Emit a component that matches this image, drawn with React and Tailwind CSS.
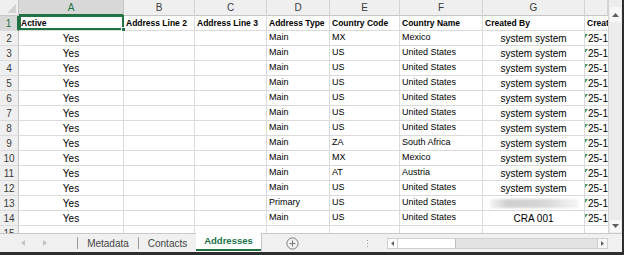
import { Fragment } from 'react';

// column widths in px, matching the sheet view
const columns = [
  { key: 'A', w: 'w-[105px]', label: 'A', selected: true },
  { key: 'B', w: 'w-[71px]', label: 'B' },
  { key: 'C', w: 'w-[72px]', label: 'C' },
  { key: 'D', w: 'w-[63px]', label: 'D' },
  { key: 'E', w: 'w-[70px]', label: 'E' },
  { key: 'F', w: 'w-[83px]', label: 'F' },
  { key: 'G', w: 'w-[102px]', label: 'G' },
  { key: 'H', w: 'w-[23px]', label: '' },
];

const headers = ['Active', 'Address Line 2', 'Address Line 3', 'Address Type', 'Country Code', 'Country Name', 'Created By', 'Created'];

const rows = [
  ['Main', 'MX', 'Mexico', 'system system'],
  ['Main', 'US', 'United States', 'system system'],
  ['Main', 'US', 'United States', 'system system'],
  ['Main', 'US', 'United States', 'system system'],
  ['Main', 'US', 'United States', 'system system'],
  ['Main', 'US', 'United States', 'system system'],
  ['Main', 'US', 'United States', 'system system'],
  ['Main', 'ZA', 'South Africa', 'system system'],
  ['Main', 'MX', 'Mexico', 'system system'],
  ['Main', 'AT', 'Austria', 'system system'],
  ['Main', 'US', 'United States', 'system system'],
  ['Primary', 'US', 'United States', null],
  ['Main', 'US', 'United States', 'CRA 001'],
];

const cellBase = 'h-full shrink-0 border-r border-b border-[#dadada] flex items-center whitespace-nowrap';
const gridCell = `${cellBase} overflow-hidden`;
const rowHead = 'w-[19px] h-full shrink-0 bg-[#efefef] border-r border-[#c6c6c6] border-b border-b-[#dcdcdc] flex items-center justify-center text-[10px] text-[#3c3c3c]';

function HeaderRow() {
  return (
    <div className="flex h-[16px] shrink-0">
      <div className="relative w-[19px] h-full shrink-0 bg-[#efefef] border-r border-b border-[#c6c6c6]">
        <svg className="absolute right-[2px] bottom-[2px]" width="9" height="9" viewBox="0 0 9 9">
          <path d="M9 0 L9 9 L0 9 Z" fill="#d3d3d3" />
        </svg>
      </div>
      {columns.map((c) =>
        c.selected ? (
          <div
            key={c.key}
            className={`${c.w} h-full shrink-0 bg-[#d8d8d8] border-r border-[#c6c6c6] border-b-2 border-b-[#217346] flex items-center justify-center text-[10px] text-[#217346]`}
          >
            {c.label}
          </div>
        ) : (
          <div
            key={c.key}
            className={`${c.w} h-full shrink-0 bg-[#efefef] border-r border-[#d4d4d4] border-b border-b-[#c6c6c6] flex items-center justify-center text-[10px] text-[#3c3c3c]`}
          >
            {c.label}
          </div>
        ),
      )}
    </div>
  );
}

function TitleRow() {
  return (
    <div className="flex h-[15px] shrink-0">
      <div className="w-[19px] h-full shrink-0 bg-[#d8d8d8] border-r-2 border-[#217346] border-b border-b-[#dcdcdc] flex items-center justify-center text-[10px] text-[#217346]">
        1
      </div>
      {columns.map((c, i) =>
        c.selected ? (
          <div key={c.key} className={`${c.w} ${cellBase} relative z-10 pl-[2px] text-[8.5px] font-bold text-black`}>
            {headers[i]}
            <div className="absolute left-0 top-[-1px] right-[-1px] bottom-0 border-2 border-[#217346]">
              <div className="absolute right-[-4px] bottom-[-4px] w-[5px] h-[5px] bg-[#217346] border border-white" />
            </div>
          </div>
        ) : (
          <div key={c.key} className={`${c.w} ${gridCell} pl-[2px] text-[8.5px] font-bold text-black ${c.key === 'H' ? 'border-r-0' : ''}`}>
            {headers[i]}
          </div>
        ),
      )}
    </div>
  );
}

function DataRow({ n, row }) {
  const [type, code, country, by] = row;
  return (
    <div className="flex h-[15px] shrink-0">
      <div className={rowHead}>{n}</div>
      <div className={`w-[105px] ${gridCell} justify-center text-[10px] text-black`}>Yes</div>
      <div className={`w-[71px] ${gridCell}`} />
      <div className={`w-[72px] ${gridCell}`} />
      <div className={`w-[63px] ${gridCell} pl-[2px] text-[9px] text-black`}>{type}</div>
      <div className={`w-[70px] ${gridCell} pl-[2px] text-[9px] text-black`}>{code}</div>
      <div className={`w-[83px] ${gridCell} pl-[2px] text-[9px] text-black`}>{country}</div>
      <div className={`w-[102px] ${gridCell} justify-center text-[10px] text-black`}>
        {by ?? (
          <div className="w-[88px] h-[9px] bg-[linear-gradient(90deg,rgba(200,200,200,0.2),#cfcfcf_20%,#d6d6d6_60%,rgba(220,220,220,0.3))] blur-[1px]" />
        )}
      </div>
      <div className={`w-[23px] ${gridCell} border-r-0 relative pl-[3px] text-[10px] text-black`}>
        <span className="absolute left-0 top-[3px] w-0 h-0 border-t-[4px] border-r-[3px] border-t-[#4a9a6a] border-r-transparent" />
        25-1
      </div>
    </div>
  );
}

function PartialRow() {
  return (
    <div className="h-[7px] shrink-0 overflow-hidden">
      <div className="flex h-[15px]">
        <div className={rowHead}>15</div>
        {columns.map((c) => (
          <div key={c.key} className={`${c.w} ${gridCell} ${c.key === 'H' ? 'border-r-0' : ''}`} />
        ))}
      </div>
    </div>
  );
}

function VScroll() {
  return (
    <div className="w-[14px] h-full shrink-0 bg-[#ececec] border-l border-[#d4d4d4] flex flex-col">
      <div className="h-[7px] shrink-0" />
      <div className="h-[15px] shrink-0 mx-[1px] bg-[#f7f7f7] flex items-center justify-center">
        <svg width="7" height="4" viewBox="0 0 7 4"><path d="M0 4 L3.5 0 L7 4 Z" fill="#606060" /></svg>
      </div>
      <div className="flex-1" />
      <div className="h-[12px] shrink-0 mx-[1px] mb-[1px] bg-[#f7f7f7] flex items-center justify-center">
        <svg width="7" height="4" viewBox="0 0 7 4"><path d="M0 0 L3.5 4 L7 0 Z" fill="#606060" /></svg>
      </div>
    </div>
  );
}

function Sep() {
  return <div className="w-px h-[12px] self-center bg-[#9a9a9a] shrink-0" />;
}

function TabBar() {
  return (
    <div className="flex h-[19px] shrink-0 bg-[#f0f0f0] border-t border-[#c8c8c8] text-[10px] text-[#444]">
      <div className="w-[77px] shrink-0 flex items-center">
        <svg className="ml-[21px]" width="4" height="6" viewBox="0 0 4 6"><path d="M4 0 L0 3 L4 6 Z" fill="#c4c4c4" /></svg>
        <svg className="ml-[18px]" width="4" height="6" viewBox="0 0 4 6"><path d="M0 0 L4 3 L0 6 Z" fill="#c4c4c4" /></svg>
      </div>
      <Sep />
      <div className="w-[60px] shrink-0 flex items-center justify-center">Metadata</div>
      <Sep />
      <div className="w-[57px] shrink-0 flex items-center justify-center">Contacts</div>
      <div className="w-[66px] shrink-0 -mt-px bg-white border-r border-[#c8c8c8] flex flex-col">
        <div className="flex-1 flex items-center justify-center text-[9.5px] font-bold text-[#217346]">Addresses</div>
        <div className="h-[2px] mb-[1px] bg-[#217346]" />
      </div>
      <div className="w-[125px] shrink-0 flex items-center">
        <svg className="ml-[24px]" width="13" height="13" viewBox="0 0 13 13">
          <circle cx="6.5" cy="6.5" r="5.6" fill="none" stroke="#7a7a7a" strokeWidth="1" />
          <path d="M6.5 3.6 V9.4 M3.6 6.5 H9.4" stroke="#7a7a7a" strokeWidth="1.1" />
        </svg>
        <div className="ml-[68px] flex flex-col gap-[2px]">
          <div className="w-px h-px bg-[#9a9a9a]" />
          <div className="w-px h-px bg-[#9a9a9a]" />
          <div className="w-px h-px bg-[#9a9a9a]" />
        </div>
      </div>
      <div className="w-[221px] shrink-0 flex items-center">
        <div className="w-full h-[11px] flex bg-[#e3e3e3] border border-[#cfcfcf]">
          <div className="w-[10px] h-full bg-white border-r border-[#cfcfcf] flex items-center justify-center">
            <svg width="3" height="5" viewBox="0 0 3 5"><path d="M3 0 L0 2.5 L3 5 Z" fill="#606060" /></svg>
          </div>
          <div className="w-[58px] h-full bg-white border-r border-[#bdbdbd]" />
          <div className="flex-1" />
          <div className="w-[10px] h-full bg-[#f7f7f7] border-l border-[#cfcfcf] flex items-center justify-center">
            <svg width="3" height="5" viewBox="0 0 3 5"><path d="M0 0 L3 2.5 L0 5 Z" fill="#606060" /></svg>
          </div>
        </div>
      </div>
      <div className="flex-1" />
    </div>
  );
}

export default function App() {
  return (
    <div className="w-[624px] h-[255px] bg-white border-r-2 border-b-[3px] border-[#2e2e2e] flex flex-col overflow-hidden font-['Liberation_Sans',Arial,sans-serif]">
      <div className="flex h-[233px] shrink-0">
        <div className="w-[608px] h-full shrink-0 flex flex-col overflow-hidden">
          <HeaderRow />
          <TitleRow />
          {rows.map((row, i) => (
            <Fragment key={i}>
              <DataRow n={i + 2} row={row} />
            </Fragment>
          ))}
          <PartialRow />
        </div>
        <VScroll />
      </div>
      <TabBar />
    </div>
  );
}
